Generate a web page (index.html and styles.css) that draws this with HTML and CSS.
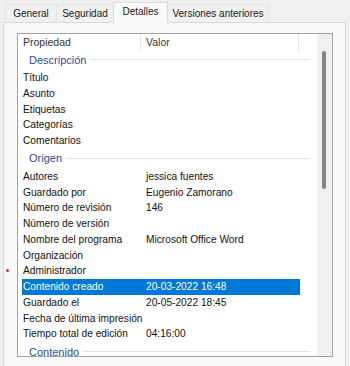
FILE: index.html
```html
<!DOCTYPE html>
<html lang="es">
<head>
    <meta charset="UTF-8">
    <title>Propiedades - Detalles</title>
    <link rel="stylesheet" href="styles.css">
</head>
<body>

    <!-- Tabs -->
    <div class="tabs">
        <div class="tab t-general">General</div>
        <div class="tab t-seguridad">Seguridad</div>
        <div class="tab t-detalles active">Detalles</div>
        <div class="tab t-versiones">Versiones anteriores</div>
    </div>

    <!-- Tab page -->
    <div class="page">
        <div class="listbox">
            <div class="rows">
                <div class="header">
                    <div class="hcell">Propiedad</div>
                    <div class="hcell">Valor</div>
                    <div class="hcell"></div>
                </div>

                <div class="group"><span>Descripción</span><i></i></div>
                <div class="row"><span>Título</span><span></span></div>
                <div class="row"><span>Asunto</span><span></span></div>
                <div class="row"><span>Etiquetas</span><span></span></div>
                <div class="row"><span>Categorías</span><span></span></div>
                <div class="row"><span>Comentarios</span><span></span></div>

                <div class="group"><span>Origen</span><i></i></div>
                <div class="row"><span>Autores</span><span>jessica fuentes</span></div>
                <div class="row"><span>Guardado por</span><span>Eugenio Zamorano</span></div>
                <div class="row"><span>Número de revisión</span><span>146</span></div>
                <div class="row"><span>Número de versión</span><span></span></div>
                <div class="row"><span>Nombre del programa</span><span>Microsoft Office Word</span></div>
                <div class="row"><span>Organización</span><span></span></div>
                <div class="row marked"><span>Administrador</span><span></span></div>
                <div class="row selected"><span>Contenido creado</span><span>20-03-2022 16:48</span></div>
                <div class="row"><span>Guardado el</span><span>20-05-2022 18:45</span></div>
                <div class="row"><span>Fecha de última impresión</span><span></span></div>
                <div class="row"><span>Tiempo total de edición</span><span>04:16:00</span></div>

                <div class="group"><span>Contenido</span><i></i></div>
            </div>
            <div class="scroll">
                <div class="thumb"></div>
            </div>
        </div>
    </div>

</body>
</html>
```

FILE: styles.css
```css
* {
    box-sizing: border-box;
}

body {
    margin: 0;
    height: 366px;
    overflow: hidden;
    background-color: #f0f0f0;
    color: #111;
    font-family: 'Liberation Sans', Arial, sans-serif;
    font-size: 10.2px;
}

/* tabs */
.tabs {
    display: flex;
    align-items: flex-end;
    height: 22px;
    padding-left: 5px;
    position: relative;
    z-index: 1;
    font-size: 10px;
}

.tab {
    height: 18px;
    line-height: 18px;
    text-align: center;
    border: 1px solid #e3e3e3;
    border-bottom: none;
    border-right: none;
    background-color: #f0f0f0;
    color: #1a1a1a;
}

.t-general { width: 51px; }
.t-seguridad { width: 57px; }
.t-detalles { width: 55px; }
.t-versiones { width: 101px; }

.tab:last-child {
    border-right: 1px solid #e3e3e3;
}

.tab.active {
    height: 21px;
    line-height: 18px;
    margin-bottom: -1px;
    background-color: #f9f9f9;
    border: 1px solid #d9d9d9;
    border-bottom: none;
}

.tab.active + .tab {
    border-left: none;
}

/* page */
.page {
    margin: 0 4px 0 3px;
    height: 360px;
    padding: 10px 12px 0 13px;
    background-color: #f9f9f9;
    border: 1px solid #d9d9d9;
}

.listbox {
    display: flex;
    height: 324px;
    border: 1px solid #a2a2a2;
    background-color: #fff;
}

.rows {
    flex: 1;
    overflow-x: visible;
    overflow-y: clip;
}

.header {
    display: grid;
    grid-template-columns: 123px 158px 1fr;
    height: 16px;
    line-height: 17px;
    color: #333;
    font-size: 10.5px;
}

.hcell {
    padding-left: 5px;
    border-right: 1px solid #e5e5e5;
    margin: 0 0 2px;
}

.hcell:last-child {
    border-right: none;
}

.group {
    display: flex;
    align-items: center;
    height: 20px;
    padding: 0 7px 1px 11px;
    color: #2a4d96;
    font-size: 11px;
}

.group i {
    flex: 1;
    height: 1px;
    margin-left: 4px;
    background-color: #dfe5ee;
}

.row {
    display: grid;
    grid-template-columns: 123px 1fr;
    width: 278px;
    height: 15.75px;
    margin-left: 4px;
    line-height: 15.75px;
    white-space: nowrap;
}

.row span {
    padding-left: 1px;
}

.row.selected {
    background-color: #0078d7;
    color: #fff;
}

.row.marked {
    position: relative;
}

.row.marked::before {
    content: "";
    position: absolute;
    left: -16px;
    top: 6px;
    width: 3px;
    height: 3px;
    border-radius: 50%;
    background-color: #e0202a;
}

/* scrollbar */
.scroll {
    width: 15px;
    padding: 17px 0 0 5px;
    background-color: #f0f0f0;
}

.thumb {
    width: 4px;
    height: 138px;
    border-radius: 2px;
    background-color: #858585;
}
```
